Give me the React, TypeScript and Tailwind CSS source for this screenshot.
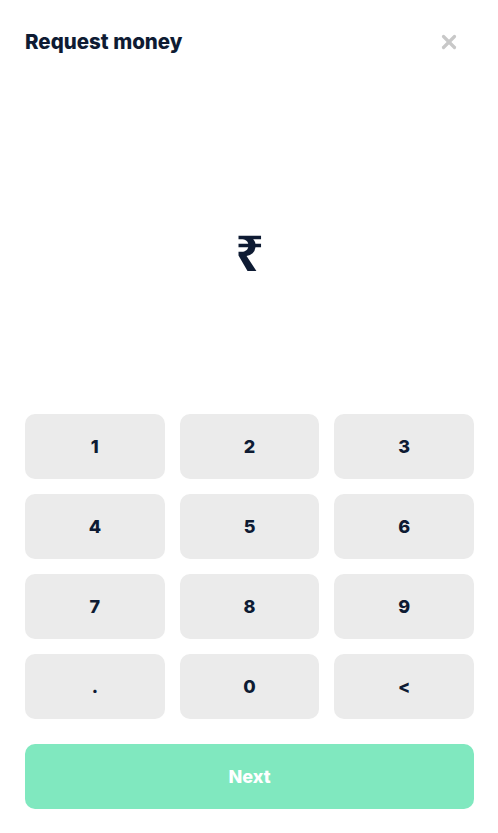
import { X } from "lucide-react";

const keys = ["1", "2", "3", "4", "5", "6", "7", "8", "9", ".", "0", "<"];

export default function App() {
  return (
    <main className="flex h-[833px] w-full flex-col bg-white pl-[25px] pr-[24px] font-['Inter',sans-serif] text-[#0e1b33]">
      <header className="flex items-center justify-between pt-7">
        <h1 className="text-[20.5px] font-extrabold leading-7 tracking-[0px]">Request money</h1>
        <button type="button" aria-label="Close" className="mr-[14px] text-[#c8c8c8]">
          <X className="size-[22px]" strokeWidth={3.5} />
        </button>
      </header>
      <section className="flex h-[358px] items-center justify-center pt-[34px]">
        <span className="font-['Noto_Sans',sans-serif] text-[50px] font-bold leading-none">₹</span>
      </section>
      <div className="grid grid-cols-3 gap-[15px]">
        {keys.map((k) => (
          <button
            key={k}
            type="button"
            className="flex h-[65px] items-center justify-center rounded-[10px] bg-[#ebebeb] text-lg font-extrabold"
          >
            {k}
          </button>
        ))}
      </div>
      <button
        type="button"
        className="mt-[25px] flex h-[65px] w-full items-center justify-center rounded-[10px] bg-[#80e8bf] text-lg font-extrabold text-white"
      >
        Next
      </button>
    </main>
  );
}
